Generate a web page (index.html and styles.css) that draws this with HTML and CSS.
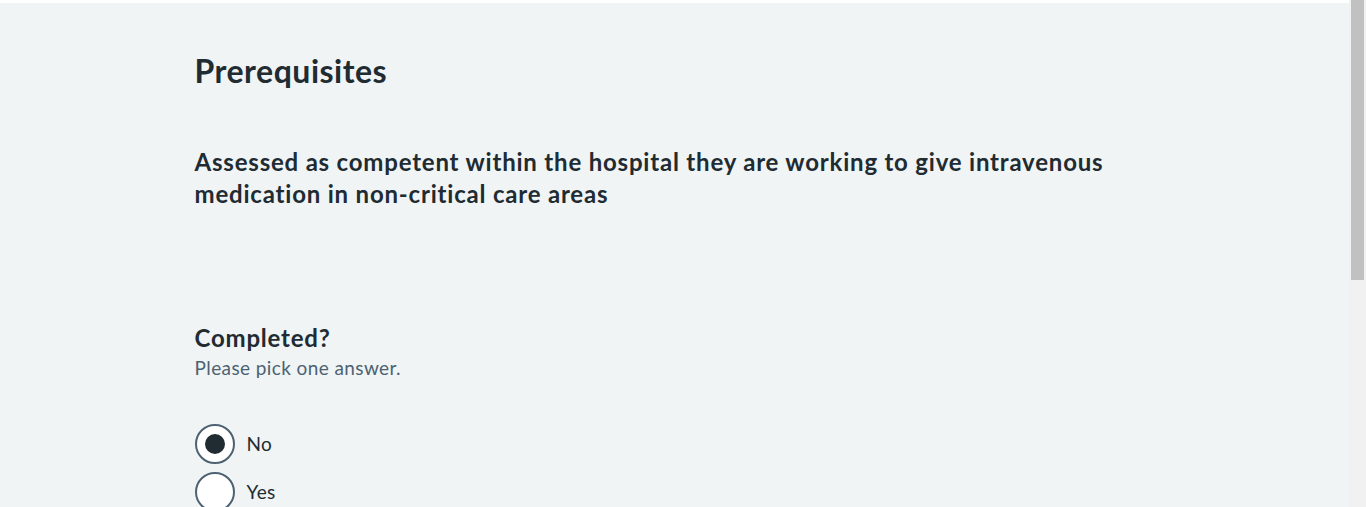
FILE: index.html
```html
<!DOCTYPE html>
<html lang="en">
<head>
<meta charset="utf-8">
<title>Prerequisites</title>
<link rel="stylesheet" href="styles.css">
</head>
<body>
<div class="window">
  <div class="viewport">
    <div class="top-strip"></div>
    <main class="page">
      <div class="container">
        <h2 class="title">Prerequisites</h2>
        <h3 class="statement">Assessed as competent within the hospital they are working to give intravenous medication in non-critical care areas</h3>
        <fieldset class="question">
          <legend class="legend">Completed?</legend>
          <div class="hint">Please pick one answer.</div>
          <div class="radios">
            <label class="radio">
              <input class="radio-input" type="radio" name="completed" value="no" checked>
              <span class="radio-mark"></span>
              <span class="radio-label">No</span>
            </label>
            <label class="radio">
              <input class="radio-input" type="radio" name="completed" value="yes">
              <span class="radio-mark"></span>
              <span class="radio-label">Yes</span>
            </label>
          </div>
        </fieldset>
      </div>
    </main>
  </div>
  <div class="scrollbar"><div class="scrollbar-thumb"></div></div>
</div>
</body>
</html>
```
FILE: styles.css
```css
html, body {
  margin: 0;
  height: 100%;
  overflow: hidden;
}
body {
  font-family: "Lato", "Open Sans", sans-serif;
  color: #212b32;
}
.window {
  display: flex;
  height: 100%;
}
.viewport {
  flex: 1;
  min-width: 0;
  background: #f0f4f5;
  overflow: hidden;
}
.scrollbar {
  width: 17px;
  flex: none;
  background: #f1f1f1;
  padding: 0 2px;
  box-sizing: border-box;
}
.scrollbar-thumb {
  height: 280px;
  background: #c1c1c1;
}
.top-strip {
  height: 3px;
  background: #ffffff;
}
.page {
  padding-top: 48px;
}
.container {
  max-width: 960px;
  margin: 0 auto;
}
.title {
  margin: 0;
  font-size: 32px;
  line-height: 40px;
  font-weight: 700;
  letter-spacing: 0.5px;
}
.statement {
  margin: 55px 0 0;
  font-size: 24px;
  line-height: 32px;
  font-weight: 700;
  letter-spacing: 0.8px;
}
.question {
  margin: 112px 0 0;
  padding: 0;
  border: 0;
}
.legend {
  padding: 0;
  font-size: 24px;
  line-height: 32px;
  font-weight: 700;
  letter-spacing: 0.8px;
}
.hint {
  font-size: 19px;
  line-height: 28px;
  color: #4c6272;
  letter-spacing: 0.4px;
}
.radios {
  margin-top: 42px;
  display: flex;
  flex-direction: column;
  gap: 8px;
}
.radio {
  display: flex;
  align-items: center;
  gap: 12px;
  cursor: pointer;
}
.radio-input {
  position: absolute;
  opacity: 0;
  width: 0;
  height: 0;
  margin: 0;
}
.radio-mark {
  box-sizing: border-box;
  width: 40px;
  height: 40px;
  border: 2px solid #4c6272;
  border-radius: 50%;
  background: #ffffff;
  display: flex;
  align-items: center;
  justify-content: center;
}
.radio-input:checked + .radio-mark::after {
  content: "";
  width: 20px;
  height: 20px;
  border-radius: 50%;
  background: #212b32;
}
.radio-label {
  font-size: 19px;
  line-height: 28px;
  letter-spacing: 0.4px;
}
```
